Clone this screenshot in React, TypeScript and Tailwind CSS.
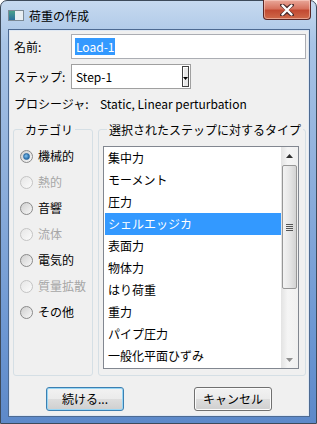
// Load creation dialog (Windows 7 style)
// ━━━━━━━━━━━━━━━━━━━━━━━━━━━━━━━━━━━━━━━━━━━━━━━━━━━━━━━━━━━━━━━━━━━━━━

const font = { fontFamily: '"Noto Sans CJK JP", "Noto Sans", sans-serif' };

interface RadioItem {
  label: string;
  checked?: boolean;
  disabled?: boolean;
}

const categories: RadioItem[] = [
  { label: "機械的", checked: true },
  { label: "熱的", disabled: true },
  { label: "音響" },
  { label: "流体", disabled: true },
  { label: "電気的" },
  { label: "質量拡散", disabled: true },
  { label: "その他" },
];

const types = [
  "集中力",
  "モーメント",
  "圧力",
  "シェルエッジカ",
  "表面力",
  "物体力",
  "はり荷重",
  "重力",
  "パイプ圧力",
  "一般化平面ひずみ",
];

function Radio({ label, checked = false, disabled = false }: RadioItem) {
  return (
    <div className="flex h-[26px] items-center gap-[5px] pl-[6px]">
      <span
        className={`flex h-[13px] w-[13px] items-center justify-center rounded-full border ${
          disabled
            ? "border-[#c4c4c4] bg-gradient-to-br from-[#e6e6e6] to-[#fbfbfb]"
            : "border-[#8a8a8a] bg-gradient-to-br from-[#cfcfcf] to-[#f8f8f8]"
        }`}
      >
        {checked && (
          <span className="h-[7px] w-[7px] rounded-full border border-[#2b6aa3] bg-[radial-gradient(circle_at_40%_40%,#7fc1f0,#0b4f8f)]" />
        )}
      </span>
      <span className={disabled ? "text-[#a6a6a6]" : "text-black"}>{label}</span>
    </div>
  );
}

function Group({
  title,
  className = "",
  titleClass = "",
  children,
}: {
  title: string;
  className?: string;
  titleClass?: string;
  children: React.ReactNode;
}) {
  return (
    <div className={`relative rounded-[3px] border border-[#d5dfe5] ${className}`}>
      <span className={`absolute -top-[8px] bg-[#f0f0f0] px-[2px] leading-[16px] ${titleClass}`}>
        {title}
      </span>
      {children}
    </div>
  );
}

function Scrollbar() {
  return (
    <div className="flex w-[17px] flex-col bg-[linear-gradient(to_right,#e3e3e3,#f5f5f5_40%,#f0f0f0)]">
      <div className="flex h-[17px] items-center justify-center">
        <svg width="7" height="4" viewBox="0 0 7 4">
          <path d="M0 4 L3.5 0 L7 4 Z" fill="#303030" />
        </svg>
      </div>
      <div className="mx-[1px] mt-[1px] flex h-[124px] items-center justify-center rounded-[2px] border border-[#979797] bg-[linear-gradient(to_right,#f3f3f3,#e8e8e8_45%,#d3d3d3)]">
        <div className="flex flex-col gap-[1px]">
          <div className="h-[1px] w-[7px] bg-[#555]" />
          <div className="h-[1px] w-[7px] bg-[#555]" />
          <div className="h-[1px] w-[7px] bg-[#555]" />
          <div className="h-[1px] w-[7px] bg-[#555]" />
        </div>
      </div>
      <div className="flex-1" />
      <div className="flex h-[17px] items-center justify-center">
        <svg width="7" height="4" viewBox="0 0 7 4">
          <path d="M0 0 L7 0 L3.5 4 Z" fill="#909090" />
        </svg>
      </div>
    </div>
  );
}

function Button({ label, focused = false }: { label: string; focused?: boolean }) {
  return (
    <div
      className={`flex h-[24px] w-[78px] items-center justify-center rounded-[3px] border ${
        focused
          ? "border-[#3c7fb1] shadow-[inset_0_0_0_1px_#97d6f5]"
          : "border-[#707070] shadow-[inset_0_0_0_1px_#fbfbfb]"
      } bg-[linear-gradient(to_bottom,#f2f2f2,#ebebeb_50%,#dddddd_51%,#cfcfcf)]`}
    >
      {label}
    </div>
  );
}

export default function App() {
  return (
    <div
      style={font}
      className="relative h-[424px] w-[317px] rounded-t-[7px] border border-[#3d4a5a] bg-[linear-gradient(to_bottom,#c6d9ef,#a8c4e6_10%,#8fb0dc_40%,#6b96d2_80%,#5d89c9)] text-[12px] text-black"
    >
      {/* title bar */}
      <div className="flex h-[28px] items-center pl-[7px] pt-[1px]">
        <div className="flex h-[11px] w-[16px] items-stretch border border-[#7c8a96] bg-white">
          <div className="w-[6px] bg-gradient-to-b from-[#4aa08a] to-[#2d6f9e]" />
          <div className="flex-1 bg-[#e8eef3]" />
        </div>
        <span className="ml-[5px] text-[12px] leading-[16px] text-black">荷重の作成</span>
      </div>

      {/* close button */}
      <div className="absolute right-[5px] -top-[1px] flex h-[20px] w-[48px] items-center justify-center rounded-b-[4px] border border-t-0 border-[#5a2626] bg-[linear-gradient(to_bottom,#e9a89a,#d7735f_45%,#c24a32_55%,#cf6a4a)] shadow-[inset_0_0_0_1px_rgba(255,220,210,0.5)]">
        <svg width="14" height="12" viewBox="0 0 14 12">
          <path
            d="M2 1 L7 5 L12 1 M2 11 L7 7 L12 11 M7 5 L7 7"
            stroke="#4a2a2a"
            strokeWidth="4"
            strokeLinecap="round"
            fill="none"
          />
          <path
            d="M2.5 1.5 L11.5 10.5 M11.5 1.5 L2.5 10.5"
            stroke="#ffffff"
            strokeWidth="2.4"
            strokeLinecap="round"
          />
        </svg>
      </div>

      {/* client area */}
      <div className="ml-[7px] flex h-[388px] w-[302px] flex-col border border-[#4d6a92] bg-[#f0f0f0] pl-[4px] pr-[3px] pt-[4px] shadow-[inset_0_0_0_1px_#dfe8f3]">
        <div className="flex h-[25px] items-center">
          <span className="w-[58px] pl-[1px]">名前:</span>
          <div className="flex h-[25px] flex-1 items-center border border-[#abadb3] bg-white pl-[3px]">
            <span className="bg-[#3399ff] px-[1px] leading-[17px] text-white">Load-1</span>
          </div>
        </div>

        <div className="mt-[5px] flex h-[25px] items-center">
          <span className="w-[58px] pl-[1px]">ステップ:</span>
          <div className="flex h-[25px] w-[120px] items-center border border-[#a0a0a0] bg-white pl-[4px] pr-[1px]">
            <span className="flex-1">Step-1</span>
            <div className="flex h-[21px] w-[7px] items-end justify-center border border-[#404040] bg-[#e8e8e8] pb-[6px] shadow-[inset_1px_1px_0_#ffffff]">
              <svg width="5" height="3" viewBox="0 0 5 3">
                <path d="M0 0 L5 0 L2.5 3 Z" fill="#000" />
              </svg>
            </div>
          </div>
        </div>

        <div className="mt-[5px] flex h-[20px] items-center pl-[1px]">
          <span className="w-[86px]">プロシージャ:</span>
          <span>Static, Linear perturbation</span>
        </div>

        <div className="mt-[15px] flex h-[247px] gap-[5px]">
          <Group title="カテゴリ" className="w-[80px] pt-[13px]" titleClass="left-[9px]">
            {categories.map((c) => (
              <Radio key={c.label} {...c} />
            ))}
          </Group>

          <Group title="選択されたステップに対するタイプ" className="flex-1 pl-[4px] pt-[16px]" titleClass="left-[8px]">
            <div className="flex h-[223px] w-[196px] border border-[#828790] bg-white">
              <div className="flex-1 overflow-hidden pl-[1px]">
                {types.map((t, i) => (
                  <div
                    key={t}
                    className={`flex h-[22px] items-center pl-[3px] ${
                      i === 3 ? "bg-[#3399ff] text-white" : "text-black"
                    }`}
                  >
                    {t}
                  </div>
                ))}
              </div>
              <Scrollbar />
            </div>
          </Group>
        </div>

        <div className="mt-[11px] flex justify-center gap-[70px] pr-[1px]">
          <Button label="続ける..." focused />
          <Button label="キャンセル" />
        </div>
      </div>
    </div>
  );
}
